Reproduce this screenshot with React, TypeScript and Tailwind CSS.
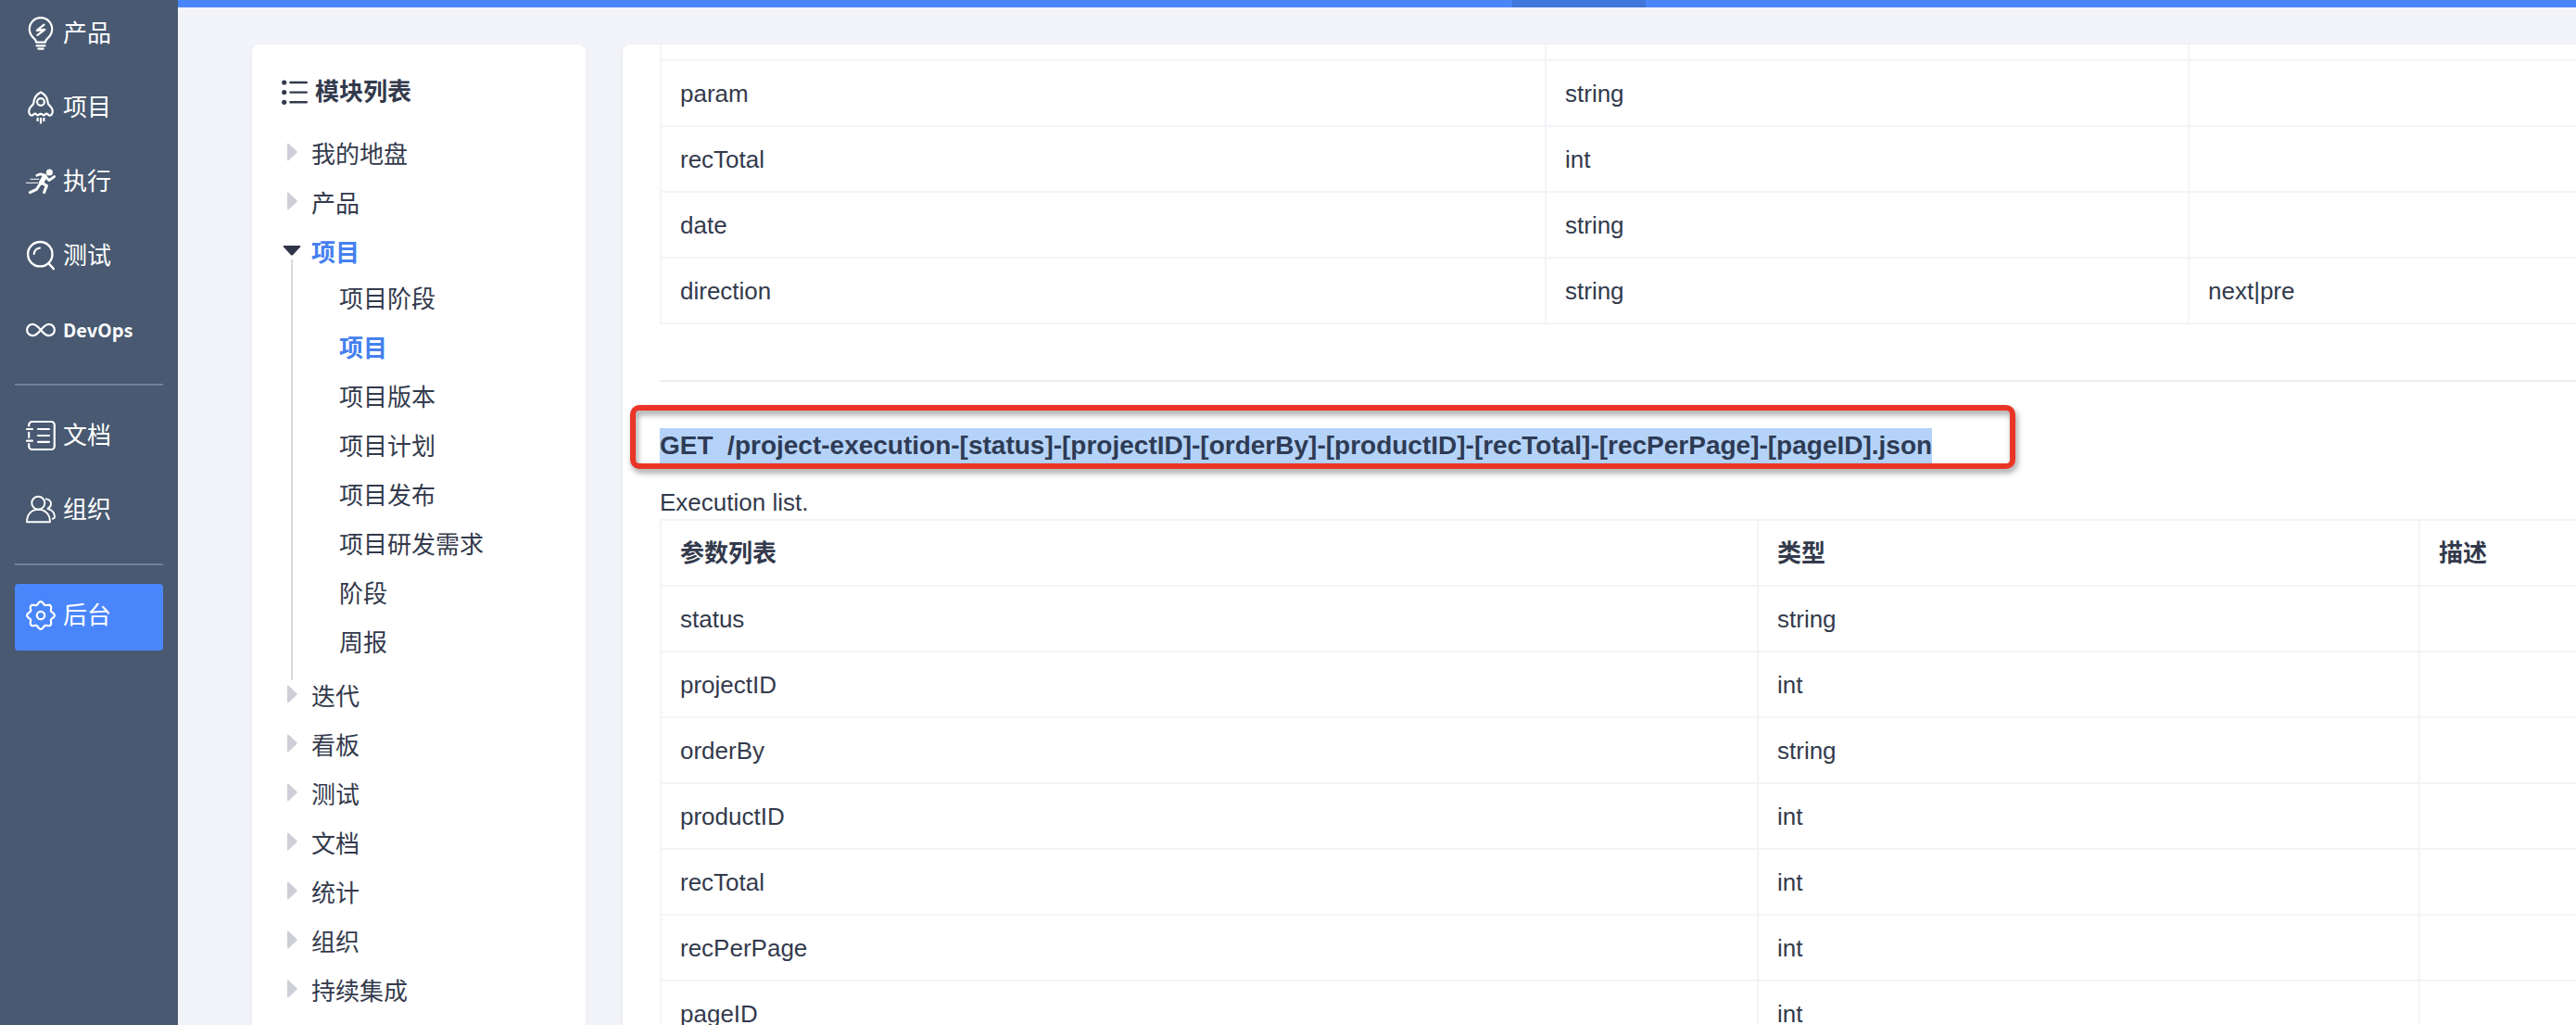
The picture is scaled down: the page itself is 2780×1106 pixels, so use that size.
import type { ReactNode } from "react";
import { clsx } from "clsx";

interface NavItem {
  label: string;
  icon: ReactNode;
  active?: boolean;
  latin?: boolean;
}

interface ModuleNode {
  label: string;
  children?: string[];
}

interface ParamRow {
  name: string;
  type: string;
  desc?: string;
}

// eight-lobed outline for the settings icon
const gearPath =
  Array.from({ length: 96 }, (_, i) => {
    const a = (i / 96) * Math.PI * 2;
    const r = 13.4 + 1.5 * Math.cos(8 * a);
    const x = (16 + r * Math.sin(a)).toFixed(2);
    const y = (18 - r * Math.cos(a)).toFixed(2);
    return `${i === 0 ? "M" : "L"}${x} ${y}`;
  }).join("") + "Z";

function NavIcon({ children }: { children: ReactNode }) {
  return (
    <svg
      viewBox="0 0 32 36"
      className="w-8 h-9 shrink-0"
      fill="none"
      stroke="currentColor"
      strokeWidth="2.2"
      strokeLinecap="round"
      strokeLinejoin="round"
      aria-hidden="true"
    >
      {children}
    </svg>
  );
}

const navGroups: NavItem[][] = [
  [
    {
      label: "产品",
      icon: (
        <NavIcon>
          <path d="M11 27.6C11 25.4 10 24.3 8.2 22.8A12.2 12.2 0 1 1 23.8 22.8C22 24.3 21 25.4 21 27.6Z" />
          <path d="M11.5 31.3H20.5M13.3 34.6H18.7" />
          <path d="M19.5 8.7L11.8 14.8L20.4 13.8L12.4 19.8" />
        </NavIcon>
      ),
    },
    {
      label: "项目",
      icon: (
        <NavIcon>
          <path d="M16 1.4C11.5 3.6 8.6 8.2 8.2 13.4C8 16 3.2 16.8 3.2 21.6C3.2 24.6 4.6 26.6 6.4 26.6C7.8 26.6 8.4 24.6 10 24.6C11.6 24.6 11 26.6 12.8 26.4C14 26.2 14 24.8 16 24.8C18 24.8 18 26.2 19.2 26.4C21 26.6 20.4 24.6 22 24.6C23.6 24.6 24.2 26.6 25.6 26.6C27.4 26.6 28.8 24.6 28.8 21.6C28.8 16.8 24 16 23.8 13.4C23.4 8.2 20.5 3.6 16 1.4Z" />
          <circle cx="16" cy="12" r="3.9" />
          <path d="M12.6 29V33M16 29V35.4M19.4 29V33" strokeLinecap="butt" />
        </NavIcon>
      ),
    },
    {
      label: "执行",
      icon: (
        <NavIcon>
          <circle cx="25.4" cy="8" r="3.5" fill="currentColor" stroke="none" />
          <path d="M11.8 11.2L15.6 9.8L20.6 11.2" strokeWidth="2.8" />
          <path d="M20.4 12.4L16.6 19" strokeWidth="5.2" />
          <path d="M21.4 13L25 16.6L30.6 12.6" strokeWidth="2.8" />
          <path d="M17.6 19.6L22.4 22.4L19.6 29.6" strokeWidth="3" />
          <path d="M15.6 20L11.4 26.4L4.4 29.6" strokeWidth="3" />
          <path d="M5 15.3H14M0 19.3H13" strokeWidth="1" />
        </NavIcon>
      ),
    },
    {
      label: "测试",
      icon: (
        <NavIcon>
          <circle cx="15.3" cy="16.2" r="13.2" strokeWidth="2.4" />
          <path d="M8.7 15.8A7 7 0 0 1 14.9 9.6" />
          <path d="M24.4 26L29.8 32" strokeWidth="2.6" />
        </NavIcon>
      ),
    },
    {
      label: "DevOps",
      latin: true,
      icon: (
        <NavIcon>
          <path d="M16 18C12 13 9.5 11.8 7.3 11.8A6.2 6.2 0 0 0 7.3 24.2C9.5 24.2 12 23 16 18C20 13 22.5 11.8 24.7 11.8A6.2 6.2 0 0 1 24.7 24.2C22.5 24.2 20 23 16 18Z" />
        </NavIcon>
      ),
    },
  ],
  [
    {
      label: "文档",
      icon: (
        <NavIcon>
          <path d="M3.2 7.4V6.6A3.6 3.6 0 0 1 6.8 3H27.2A3.6 3.6 0 0 1 30.8 6.6V29.4A3.6 3.6 0 0 1 27.2 33H6.8A3.6 3.6 0 0 1 3.2 29.4V27.2" />
          <path d="M3.2 14.8V20" />
          <path d="M1 11H7M1 23.7H7M13 11H25M13 18H25M13 24.8H25" />
        </NavIcon>
      ),
    },
    {
      label: "组织",
      icon: (
        <NavIcon>
          <g strokeWidth="1.9">
            <circle cx="13.3" cy="10.7" r="7" />
            <path d="M1 31.3C1 23 6 17.8 13.4 17.8S26 23 26 31.3Z" />
            <path d="M21.8 6.4C25 6.8 27 8.8 27 11.8C27 14 25.6 15.8 23.4 16.8C28.4 18.4 31 21.8 31 25.6C31 27.2 30.2 27.7 28.8 27.7" />
          </g>
        </NavIcon>
      ),
    },
  ],
  [
    {
      label: "后台",
      active: true,
      icon: (
        <NavIcon>
          <path d={gearPath} />
          <circle cx="16" cy="18" r="4.2" />
        </NavIcon>
      ),
    },
  ],
];

const modules: ModuleNode[] = [
  { label: "我的地盘" },
  { label: "产品" },
  {
    label: "项目",
    children: ["项目阶段", "项目", "项目版本", "项目计划", "项目发布", "项目研发需求", "阶段", "周报"],
  },
  { label: "迭代" },
  { label: "看板" },
  { label: "测试" },
  { label: "文档" },
  { label: "统计" },
  { label: "组织" },
  { label: "持续集成" },
];

const dynamicParams: ParamRow[] = [
  { name: "param", type: "string" },
  { name: "recTotal", type: "int" },
  { name: "date", type: "string" },
  { name: "direction", type: "string", desc: "next|pre" },
];

const executionParams: ParamRow[] = [
  { name: "status", type: "string" },
  { name: "projectID", type: "int" },
  { name: "orderBy", type: "string" },
  { name: "productID", type: "int" },
  { name: "recTotal", type: "int" },
  { name: "recPerPage", type: "int" },
  { name: "pageID", type: "int" },
];

const cell = "border-2 border-r-0 border-[#f3f4f7] px-5 pt-0.5 text-left";

function Sidebar() {
  return (
    <nav className="w-48 shrink-0 bg-[#485971] px-4 pt-0.5 text-white">
      {navGroups.map((group, i) => (
        <ul
          key={i}
          className={clsx("flex flex-col gap-2", i > 0 && "mt-5 border-t-2 border-[#71809a] pt-5")}
        >
          {group.map((item) => (
            <li key={item.label}>
              <a
                href="#"
                className={clsx(
                  "flex h-[72px] items-center gap-2 rounded px-3 pb-1",
                  item.active && "bg-[#4a86fb]"
                )}
              >
                {item.icon}
                <span
                  className={
                    item.latin
                      ? "font-['Noto_Sans_CJK_SC',sans-serif] text-xl font-bold"
                      : "text-[26px] leading-9"
                  }
                >
                  {item.label}
                </span>
              </a>
            </li>
          ))}
        </ul>
      ))}
    </nav>
  );
}

function Caret({ open }: { open: boolean }) {
  return (
    <svg viewBox="0 0 20 20" className="size-5 shrink-0" aria-hidden="true">
      {open ? (
        <path d="M1.5 5H18.5Q20 5.4 19 6.6L11 15.2Q10 16 9 15.2L1 6.6Q0 5.4 1.5 5Z" fill="#2f3547" />
      ) : (
        <path d="M5 1.5Q5.4 0 6.6 1L15.4 9.2Q16 10 15.4 10.8L6.6 19Q5.4 20 5 18.5Z" fill="#cdced6" />
      )}
    </svg>
  );
}

function ModuleTree() {
  return (
    <aside className="w-[360px] shrink-0 rounded-t-lg bg-white px-8 pt-[33px] shadow-[0_2px_6px_rgba(0,0,0,0.06)]">
      <h2 className="flex items-center gap-2 text-[26px] leading-9 font-bold">
        <svg
          viewBox="0 0 28 28"
          className="size-7"
          fill="currentColor"
          stroke="currentColor"
          strokeWidth="2.4"
          strokeLinecap="round"
          aria-hidden="true"
        >
          <path d="M9.4 4H26.8M9.4 14.6H26.8M9.4 25.3H26.8" />
          <g stroke="none">
            <circle cx="2.7" cy="4" r="2.6" />
            <circle cx="2.7" cy="14.6" r="2.6" />
            <circle cx="2.7" cy="25.3" r="2.6" />
          </g>
        </svg>
        模块列表
      </h2>
      <ul className="mt-8 pl-px text-[26px] leading-9">
        {modules.map((node) => {
          const open = Boolean(node.children);
          return (
            <li key={node.label} className="flex gap-[11px]">
              <div className="flex flex-col items-center pt-[5px]">
                <Caret open={open} />
                {open && <div className="w-0.5 flex-1 bg-[#d8d9dc]" />}
              </div>
              {node.children ? (
                <div className="pb-[5px]">
                  <a href="#" className="block pb-3.5 font-bold text-[#4580f0]">
                    {node.label}
                  </a>
                  <ul className="pl-[30px]">
                    {node.children.map((child) => (
                      <li key={child} className="pb-[17px]">
                        <a
                          href="#"
                          className={clsx("block", child === node.label && "font-bold text-[#4580f0]")}
                        >
                          {child}
                        </a>
                      </li>
                    ))}
                  </ul>
                </div>
              ) : (
                <a href="#" className="block pb-[17px]">
                  {node.label}
                </a>
              )}
            </li>
          );
        })}
      </ul>
    </aside>
  );
}

function ParamRows({ rows }: { rows: ParamRow[] }) {
  return (
    <>
      {rows.map((row) => (
        <tr key={row.name} className="h-[71px]">
          <td className={cell}>{row.name}</td>
          <td className={cell}>{row.type}</td>
          <td className={cell}>{row.desc}</td>
        </tr>
      ))}
    </>
  );
}

function ApiDoc() {
  return (
    <main className="min-w-0 flex-1 overflow-hidden rounded-tl-lg bg-white pl-10 shadow-[0_2px_6px_rgba(0,0,0,0.06)]">
      <table className="w-full table-fixed border-collapse">
        <colgroup>
          <col className="w-[955px]" />
          <col className="w-[694px]" />
          <col />
        </colgroup>
        <tbody>
          <tr className="h-[17px]">
            <td className="border-l-2 border-[#f3f4f7]" />
            <td className="border-l-2 border-[#f3f4f7]" />
            <td className="border-l-2 border-[#f3f4f7]" />
          </tr>
          <ParamRows rows={dynamicParams} />
        </tbody>
      </table>

      <section className="mt-[60px] border-t-2 border-[#edeef2] pt-[50px]">
        <h3 className="relative text-[28px] leading-[38px] font-bold whitespace-pre text-[#2e3b54]">
          <span className="inline-block bg-[#b5d3f8]">
            GET&nbsp; /project-execution-[status]-[projectID]-[orderBy]-[productID]-[recTotal]-[recPerPage]-[pageID].json
          </span>
          <span className="absolute -top-[25px] -left-8 h-[69px] w-[1495px] rounded-[10px] border-6 border-[#ea3526] drop-shadow-[2px_4px_3px_rgba(0,0,0,0.4)]" />
        </h3>
        <p className="mt-6 leading-9">Execution list.</p>
        <table className="w-full table-fixed border-collapse">
          <colgroup>
            <col className="w-[1184px]" />
            <col className="w-[714px]" />
            <col />
          </colgroup>
          <thead>
            <tr className="h-[71px]">
              <th className={cell}>参数列表</th>
              <th className={cell}>类型</th>
              <th className={cell}>描述</th>
            </tr>
          </thead>
          <tbody>
            <ParamRows rows={executionParams} />
          </tbody>
        </table>
      </section>
    </main>
  );
}

export default function App() {
  return (
    <div className="flex h-screen overflow-hidden bg-[#f3f4f9] font-['Liberation_Sans','Noto_Sans_CJK_SC',sans-serif] text-[26px] text-[#333a4c]">
      <Sidebar />
      <div className="flex min-w-0 flex-1 flex-col">
        <header className="flex h-2 shrink-0 bg-[#4a86fb] pl-[1440px]">
          <div className="w-36 bg-[#4176dc]" />
        </header>
        <div className="flex min-h-0 flex-1 gap-10 pt-10 pl-20">
          <ModuleTree />
          <ApiDoc />
        </div>
      </div>
    </div>
  );
}
